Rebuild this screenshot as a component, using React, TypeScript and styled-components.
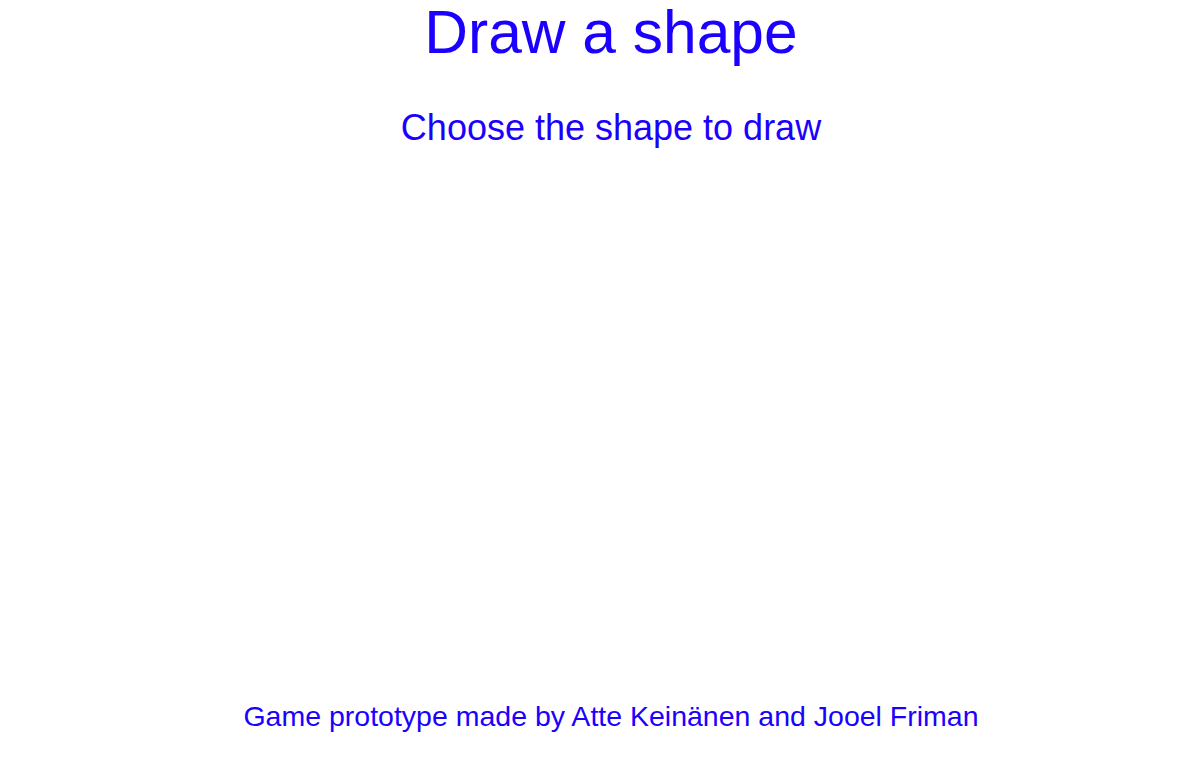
import React from "react";
import styled, { createGlobalStyle } from "styled-components";

const GlobalStyle = createGlobalStyle`
  html, body {
    margin: 0;
    padding: 0;
    background: #ffffff;
  }
  body {
    font-family: "Liberation Sans", Arial, sans-serif;
    color: #1c00ff;
  }
`;

const Page = styled.div`
  min-height: 100vh;
  box-sizing: border-box;
  display: flex;
  flex-direction: column;
  align-items: center;
  padding: 0 0 33px 24px;
`;

const Title = styled.h1`
  margin: 0;
  font-size: 60.5px;
  font-weight: 400;
  line-height: 65px;
  text-align: center;
`;

const Subtitle = styled.h2`
  margin: 43px 0 0;
  font-size: 36px;
  font-weight: 400;
  line-height: 40px;
  text-align: center;
`;

const Stage = styled.main`
  flex: 1;
  width: 100%;
`;

const Footer = styled.footer`
  font-size: 28.5px;
  line-height: 32px;
  text-align: center;
`;

export default function App() {
  return (
    <>
      <GlobalStyle />
      <Page>
        <Title>Draw a shape</Title>
        <Subtitle>Choose the shape to draw</Subtitle>
        <Stage />
        <Footer>Game prototype made by Atte Keinänen and Jooel Friman</Footer>
      </Page>
    </>
  );
}
